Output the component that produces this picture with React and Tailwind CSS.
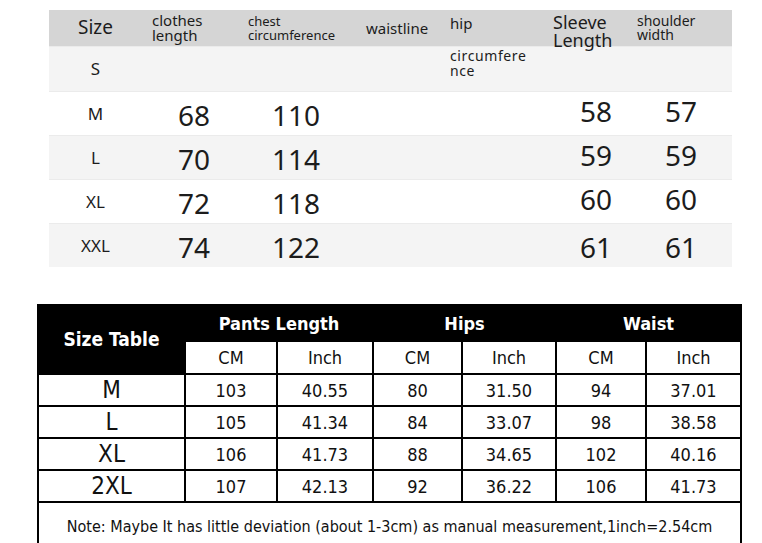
const topCols = ['w-[93px]', 'w-[96px]', 'w-[118px]', 'w-[84px]', 'w-[103px]', 'w-[84px]', 'w-[105px]']

const topRows = [
  { size: 'S', bg: 'bg-[#f4f4f4]' },
  { size: 'M', len: '68', chest: '110', sleeve: '58', shoulder: '57', bg: 'bg-white' },
  { size: 'L', len: '70', chest: '114', sleeve: '59', shoulder: '59', bg: 'bg-[#f4f4f4]' },
  { size: 'XL', len: '72', chest: '118', sleeve: '60', shoulder: '60', bg: 'bg-white' },
  { size: 'XXL', len: '74', chest: '122', sleeve: '61', shoulder: '61', bg: 'bg-[#f4f4f4]' },
]

const pants = [
  ['M', '103', '40.55', '80', '31.50', '94', '37.01'],
  ['L', '105', '41.34', '84', '33.07', '98', '38.58'],
  ['XL', '106', '41.73', '88', '34.65', '102', '40.16'],
  ['2XL', '107', '42.13', '92', '36.22', '106', '41.73'],
]

function TopTable() {
  return (
    <div className="ml-[49px] w-[683px] text-[#1c1c1c] font-['Noto_Sans',sans-serif]">
      <div className="flex h-[36px] bg-[#d5d5d5]">
        <div className={`${topCols[0]} pt-[6px] text-center text-[19px] leading-[22px]`}>Size</div>
        <div className={`${topCols[1]} pl-[10px] pt-[3px] text-[15px] leading-[15px]`}>
          clothes<br />length
        </div>
        <div className={`${topCols[2]} pl-[10px] pt-[4px] text-[13px] leading-[14px]`}>
          chest<br />circumference
        </div>
        <div className={`${topCols[3]} pl-[10px] pt-[9px] text-[15px] leading-[18px]`}>waistline</div>
        <div className={`${topCols[4]} pl-[10px] pt-[4px] text-[15px] leading-[18px]`}>hip</div>
        <div className={`${topCols[5]} relative z-10 pl-[10px] pt-[3px] text-[18px] leading-[18px]`}>
          Sleeve<br />Length
        </div>
        <div className={`${topCols[6]} pl-[10px] pt-[4px] text-[14px] leading-[14px]`}>
          shoulder<br />width
        </div>
      </div>
      {topRows.map((r, i) => (
        <div
          key={r.size}
          className={`flex items-center ${i === 0 ? 'h-[45px]' : 'h-[44px]'} ${r.bg} border-t border-[#ebebeb]`}
        >
          <div className={`${topCols[0]} text-center text-[17px]`}>{r.size}</div>
          <div className={`${topCols[1]} pl-[36px] pt-[3px] text-[28px]`}>{r.len}</div>
          <div className={`${topCols[2]} pl-[34px] pt-[3px] text-[28px]`}>{r.chest}</div>
          <div className={topCols[3]} />
          <div className={`${topCols[4]} self-start pl-[10px] pt-[1px] text-[14px] leading-[15px] tracking-[0.6px]`}>
            {i === 0 && (
              <>
                circumfere<br />nce
              </>
            )}
          </div>
          <div className={`${topCols[5]} pl-[37px] text-[28px] ${i < 4 ? 'pb-[5px]' : 'pt-[3px]'}`}>{r.sleeve}</div>
          <div className={`${topCols[6]} pl-[38px] text-[28px] ${i < 4 ? 'pb-[5px]' : 'pt-[3px]'}`}>{r.shoulder}</div>
        </div>
      ))}
    </div>
  )
}

function PantsTable() {
  const cell = 'border-2 border-black text-center p-0'
  return (
    <table className="ml-[37px] mt-[37px] w-[703px] table-fixed border-collapse border-2 border-black text-[#111] font-['DejaVu_Sans',sans-serif] font-stretch-condensed">
      <colgroup>
        <col className="w-[147px]" />
        <col className="w-[92px]" />
        <col className="w-[96px]" />
        <col className="w-[89px]" />
        <col className="w-[94px]" />
        <col className="w-[90px]" />
        <col className="w-[95px]" />
      </colgroup>
      <thead>
        <tr className="h-[36px] bg-black text-white">
          <th rowSpan={2} className={`${cell} text-[19px] font-bold`}>Size Table</th>
          <th colSpan={2} className={`${cell} text-[18px] font-bold`}>Pants Length</th>
          <th colSpan={2} className={`${cell} text-[18px] font-bold`}>Hips</th>
          <th colSpan={2} className={`${cell} text-[18px] font-bold`}>Waist</th>
        </tr>
        <tr className="h-[33px]">
          {['CM', 'Inch', 'CM', 'Inch', 'CM', 'Inch'].map((t, i) => (
            <th key={i} className={`${cell} bg-white text-[18px] font-normal`}>{t}</th>
          ))}
        </tr>
      </thead>
      <tbody>
        {pants.map((r) => (
          <tr key={r[0]} className="h-[32px]">
            <td className={`${cell} text-[24px] leading-[28px]`}>{r[0]}</td>
            {r.slice(1).map((v, i) => (
              <td key={i} className={`${cell} text-[18px]`}>{v}</td>
            ))}
          </tr>
        ))}
        <tr className="h-[50px]">
          <td colSpan={7} className={`${cell} text-[16px]`}>
            Note: Maybe It has little deviation (about 1-3cm) as manual measurement,1inch=2.54cm
          </td>
        </tr>
      </tbody>
    </table>
  )
}

export default function App() {
  return (
    <div className="min-h-[543px] w-[762px] bg-white pt-[10px]">
      <TopTable />
      <PantsTable />
    </div>
  )
}
